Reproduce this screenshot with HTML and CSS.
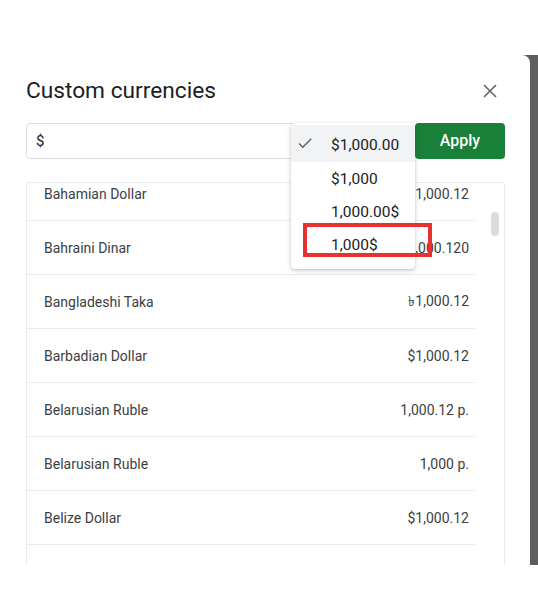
FILE: index.html
```html
<!DOCTYPE html>
<html>
<head>
<meta charset="utf-8">
<link rel="stylesheet" href="styles.css">
</head>
<body>
<div class="stage">
  <div class="dialog">
    <div class="head">
      <h1 class="title">Custom currencies</h1>
      <svg class="close" width="24" height="24" viewBox="0 0 24 24"><path d="M6 6L18 18M18 6L6 18" stroke="#5f6368" stroke-width="1.6" fill="none"/></svg>
    </div>
    <div class="bar">
      <div class="input">$</div>
      <button class="apply">Apply</button>
    </div>
    <div class="list">
      <div class="rows">
        <div class="rows-inner">
          <div class="row"><span>Bahamian Dollar</span><span>$1,000.12</span></div>
          <div class="row"><span>Bahraini Dinar</span><span>BD1,000.120</span></div>
          <div class="row"><span>Bangladeshi Taka</span><span>৳1,000.12</span></div>
          <div class="row"><span>Barbadian Dollar</span><span>$1,000.12</span></div>
          <div class="row"><span>Belarusian Ruble</span><span>1,000.12 р.</span></div>
          <div class="row"><span>Belarusian Ruble</span><span>1,000 р.</span></div>
          <div class="row"><span>Belize Dollar</span><span>$1,000.12</span></div>
          <div class="row"></div>
        </div>
      </div>
      <div class="track"><div class="thumb"></div></div>
    </div>
    <div class="menu">
      <div class="item sel"><svg class="check" width="18" height="18" viewBox="0 0 24 24"><path d="M9 16.17L4.83 12l-1.42 1.41L9 19 21 7l-1.41-1.41z" fill="#5f6368"/></svg><span>$1,000.00</span></div>
      <div class="item"><span>$1,000</span></div>
      <div class="item"><span>1,000.00$</span></div>
      <div class="item"><span>1,000$</span></div>
    </div>
    <div class="mark"></div>
  </div>
  <div class="backdrop"></div>
</div>
</body>
</html>
```
FILE: styles.css
```css
html, body {
  margin: 0;
  padding: 0;
  background: #ffffff;
  font-family: Roboto, "Noto Sans", "DejaVu Sans", sans-serif;
}
.stage {
  margin-top: 55px;
  height: 510px;
  display: flex;
  background: #5d5e60;
  overflow: hidden;
}
.backdrop {
  width: 8px;
}
.dialog {
  flex: 1;
  background: #fff;
  border-top-right-radius: 8px;
  position: relative;
  padding: 22px 25px 0 26px;
  display: flex;
  flex-direction: column;
}
.head {
  display: flex;
  justify-content: space-between;
  align-items: center;
  height: 28px;
}
.title {
  margin: 0;
  font-family: Roboto, sans-serif;
  font-weight: 400;
  font-size: 22.7px;
  line-height: 28px;
  color: #202124;
}
.close {
  margin-right: 3px;
}
.bar {
  margin-top: 18px;
  display: flex;
  gap: 10px;
  height: 36px;
}
.input {
  flex: 1;
  border: 1px solid #dadce0;
  border-radius: 4px;
  display: flex;
  align-items: center;
  padding-left: 9px;
  font-size: 15px;
  color: #202124;
}
.apply {
  width: 90px;
  border: none;
  border-radius: 4px;
  background: #188038;
  color: #fff;
  font-family: Roboto, sans-serif;
  font-weight: 500;
  font-size: 16px;
  padding: 0;
  padding-bottom: 2px;
}
.list {
  margin-top: 23px;
  flex: 1;
  border: 1px solid #e8eaed;
  border-bottom: none;
  border-radius: 4px 4px 0 0;
  display: flex;
  overflow: hidden;
}
.rows {
  width: 448px;
  overflow: hidden;
}
.rows-inner {
  margin-top: -16px;
}
.row {
  height: 53px;
  border-bottom: 1px solid #e8eaed;
  display: flex;
  justify-content: space-between;
  align-items: center;
  padding: 0 6px 0 17px;
  font-size: 14px;
  color: #3c4043;
}
.track {
  flex: 1;
  padding: 29px 0 0 16px;
}
.thumb {
  width: 8px;
  height: 24px;
  border-radius: 4px;
  background: #dadce0;
}
.menu {
  position: absolute;
  left: 291px;
  top: 68px;
  width: 124px;
  background: #fff;
  border-radius: 4px;
  box-shadow: 0 1px 3px rgba(60,64,67,0.25), 0 2px 6px rgba(60,64,67,0.12);
  padding: 2px 0 8px;
}
.item {
  height: 33px;
  display: flex;
  align-items: center;
  padding-left: 40px;
  font-size: 15.5px;
  color: #202124;
  position: relative;
}
.item.sel {
  background: #f1f3f4;
  height: 37px;
  padding-top: 2px;
  box-sizing: border-box;
}
.check {
  position: absolute;
  left: 5px;
  top: 9px;
}
.mark {
  position: absolute;
  left: 303px;
  top: 168px;
  width: 129px;
  height: 34px;
  box-sizing: border-box;
  border: 4px solid #e63330;
}
```
